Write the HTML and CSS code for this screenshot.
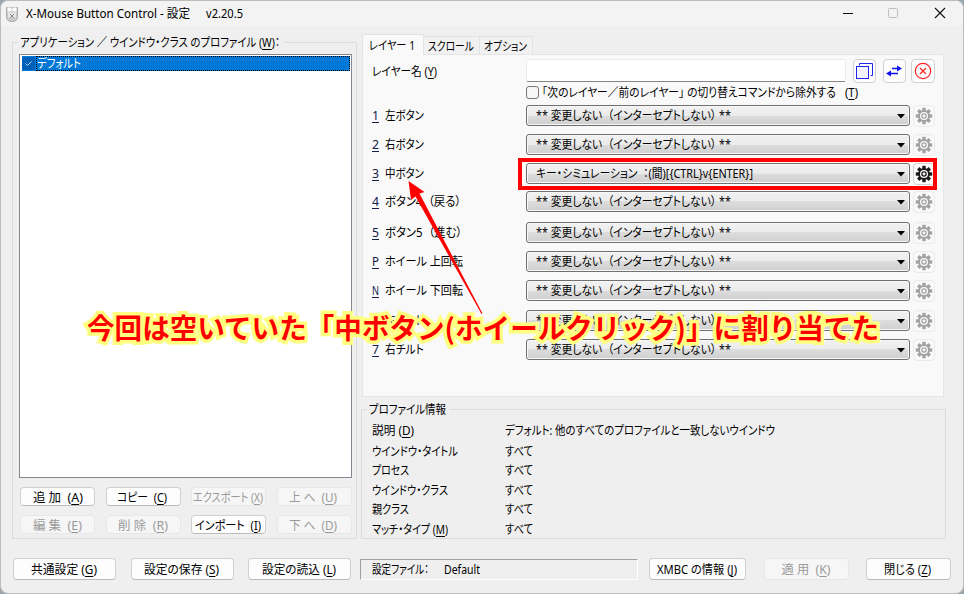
FILE: index.html
```html
<!DOCTYPE html>
<html lang="ja">
<head>
<meta charset="utf-8">
<title>X-Mouse Button Control - 設定</title>
<link rel="stylesheet" href="styles.css">
</head>
<body>
<svg class="defs" width="0" height="0">
  <symbol id="gear" viewBox="0 0 18 18">
    <g fill="currentColor">
      <rect x="7.3" y=".8" width="3.4" height="16.4"/>
      <rect x="7.3" y=".8" width="3.4" height="16.4" transform="rotate(45 9 9)"/>
      <rect x="7.3" y=".8" width="3.4" height="16.4" transform="rotate(90 9 9)"/>
      <rect x="7.3" y=".8" width="3.4" height="16.4" transform="rotate(135 9 9)"/>
      <circle cx="9" cy="9" r="5.9"/>
    </g>
    <circle cx="9" cy="9" r="4" fill="#fbfbfb"/>
    <circle cx="9" cy="9" r="2.1" fill="none" stroke="currentColor" stroke-width="1.3"/>
  </symbol>
</svg>
<div class="window">
  <header class="titlebar">
    <svg class="app-icon" width="12" height="16" viewBox="0 0 12 16"><path d="M.5 1.5h11v9q0 5-5.500 5t-5.500-5z" fill="#c9c9c9" stroke="#aaa"/><path d="M1.500 1.500h4v4h-4zM6.500 1.500h4v4h-4z" fill="#fff"/><path d="M2 6.500h8v5H2z" fill="#e8e8e8"/><path d="M4 8l4 4M8 8l-4 4" stroke="#888"/></svg>
    <span class="title" data-w="164">X-Mouse Button Control - 設定</span>
    <span class="version" data-w="37">v2.20.5</span>
    <svg class="winctl" width="104" height="14" viewBox="0 0 104 14"><path d="M1 6.500h10" stroke="#111" fill="none"/><rect x="46.500" y="1.500" width="9" height="9" rx="1" fill="none" stroke="#c0c0c0"/><path d="M93 1l10 10M103 1L93 11" stroke="#111" stroke-width="1.100"/></svg>
  </header>

  <main class="content">
    <section class="group profiles">
      <h2 class="legend"><span data-w="260">アプリケーション ／ ウインドウ・クラス のプロファイル (<u>W</u>)：</span></h2>
      <div class="listbox">
        <div class="item">
          <svg class="check" width="13" height="13" viewBox="0 0 13 13"><rect width="13" height="13" rx="2" fill="#005fb8"/><path d="M3.500 6.500l2 2 4-4" fill="none" stroke="#c5dcf2"/></svg>
          <div class="item-name"><span data-w="44">デフォルト</span></div>
        </div>
      </div>
      <div class="actions">
        <button class="btn"><span data-w="50">追 加&nbsp; (<u>A</u>)</span></button>
        <button class="btn"><span data-w="50">コピー&nbsp; (<u>C</u>)</span></button>
        <button class="btn" disabled><span data-w="70">エクスポート (<u>X</u>)</span></button>
        <button class="btn" disabled><span data-w="48">上 へ&nbsp; (<u>U</u>)</span></button>
        <button class="btn" disabled><span data-w="49">編 集&nbsp; (<u>E</u>)</span></button>
        <button class="btn" disabled><span data-w="50">削 除&nbsp; (<u>R</u>)</span></button>
        <button class="btn"><span data-w="66">インポート&nbsp; (<u>I</u>)</span></button>
        <button class="btn" disabled><span data-w="48">下 へ&nbsp; (<u>D</u>)</span></button>
      </div>
    </section>

    <section class="right">
      <nav class="tabs">
        <div class="tab active"><span data-w="46">レイヤー 1</span></div>
        <div class="tab"><span data-w="46">スクロール</span></div>
        <div class="tab"><span data-w="43">オプション</span></div>
      </nav>
      <div class="panel">
        <div class="layer">
          <div class="layer-label"><span data-w="65">レイヤー名 (<u>Y</u>)</span></div>
          <input class="layer-input" type="text">
          <div class="tools">
            <div class="tool"><svg width="22" height="22" viewBox="0 0 22 22"><path d="M5.500 5.500V3.500h13v12h-2" fill="none" stroke="#2222f0"/><rect x="2.500" y="6.500" width="12" height="12" fill="#f4f4ff" stroke="#2222f0"/></svg></div>
            <div class="tool"><svg width="22" height="22" viewBox="0 0 22 22"><path d="M8 8.500h7M6 13.500h8" stroke="#1111ef" stroke-width="1.500"/><path d="M13 5.500l5 3-5 3zM7 10.500l-5 3 5 3z" fill="#1111ef"/></svg></div>
            <div class="tool wide"><svg width="22" height="22" viewBox="0 0 22 22"><circle cx="11" cy="11" r="7.700" fill="none" stroke="#f22" stroke-width="1.200"/><path d="M8 8l6 6M14 8l-6 6" stroke="#f22" stroke-width="1.200"/></svg></div>
          </div>
        </div>
        <div class="exclude"><i class="box"></i><span data-w="294">「次のレイヤー／前のレイヤー」 の切り替えコマンドから除外する</span><span class="key" data-w="13">(<u>T</u>)</span></div>
        <div class="rows" id="rows"></div>
      </div>
      <section class="group info">
        <h2 class="legend"><span data-w="77">プロファイル情報</span></h2>
        <dl class="details">
          <dt><span data-w="42">説明 (<u>D</u>)</span></dt><dd><span data-w="270">デフォルト: 他のすべてのプロファイルと一致しないウインドウ</span></dd>
          <dt><span data-w="86">ウインドウ・タイトル</span></dt><dd><span data-w="28">すべて</span></dd>
          <dt><span data-w="37">プロセス</span></dt><dd><span data-w="28">すべて</span></dd>
          <dt><span data-w="76">ウインドウ・クラス</span></dt><dd><span data-w="28">すべて</span></dd>
          <dt><span data-w="37">親クラス</span></dt><dd><span data-w="28">すべて</span></dd>
          <dt><span data-w="76">マッチ・タイプ (<u>M</u>)</span></dt><dd><span data-w="28">すべて</span></dd>
        </dl>
      </section>
    </section>
  </main>

  <footer class="footer">
    <button class="btn"><span data-w="66">共通設定 (<u>G</u>)</span></button>
    <button class="btn"><span data-w="75">設定の保存 (<u>S</u>)</span></button>
    <button class="btn"><span data-w="74">設定の読込 (<u>L</u>)</span></button>
    <div class="status"><span data-w="57">設定ファイル：</span><span data-w="36">Default</span></div>
    <button class="btn"><span data-w="80">XMBC の情報 (<u>J</u>)</span></button>
    <button class="btn" disabled><span data-w="49">適 用&nbsp; (<u>K</u>)</span></button>
    <button class="btn"><span data-w="47">閉じる (<u>Z</u>)</span></button>
  </footer>

  <div class="highlight"></div>
  <svg class="arrow" width="80" height="140" viewBox="0 0 80 140"><path d="M3.500 1L19.500 12 14.500 13.500 77.500 133.500 76.500 134 10.500 16.500 6 20z" fill="#f00"/></svg>
  <div class="caption"><span data-w="792">今回は空いていた「中ボタン(ホイールクリック)」に割り当てた</span></div>
</div>
<script src="main.js"></script>
</body>
</html>
```
FILE: styles.css
```css
* { box-sizing: border-box; }
body {
  margin: 0;
  background: #9aa7ae;
  overflow: hidden;
  color: #000;
  font: 12px/16px "Noto Sans", "Noto Sans CJK JP", sans-serif;
}
.defs { position: absolute; }
.window {
  position: relative;
  width: 964px;
  height: 594px;
  display: flex;
  flex-direction: column;
  background: #efefef;
  border: 1px solid #bcbcbc;
  border-radius: 8px;
  overflow: hidden;
}
[data-w] {
  display: inline-block;
  flex: none;
  white-space: nowrap;
  transform-origin: 0 50%;
  font-feature-settings: "palt";
}
.content [data-w], .footer [data-w] { margin: 1px 1px -1px -1px; }
u { text-underline-offset: 2px; text-decoration-thickness: 1px; text-decoration-skip-ink: none; }

.titlebar {
  height: 25px;
  flex: none;
  display: flex;
  align-items: center;
  padding: 0 17px 0 5px;
  background: #f3f3f3;
}
.title { margin-left: 8px; }
.version { margin-left: 16px; }
.winctl { margin-left: auto; }

.content { display: flex; height: 513px; flex: none; padding-left: 11px; }
.group { position: relative; border: 1px solid #dcdcdc; }
.legend {
  position: absolute;
  top: -9px;
  left: 5px;
  margin: 0;
  padding: 0 3px;
  background: #efefef;
  font: inherit;
  display: flex;
}
.profiles { width: 345px; height: 497px; margin-top: 16px; padding: 11px 4px 0 6px; }
.listbox { width: 333px; height: 424px; padding: 1px 1px 0 2px; border: 1px solid #828790; background: #fff; }
.item { display: flex; height: 15px; background: #0078d7; }
.check { margin-top: 1px; }
.item-name { flex: 1; margin-left: 1px; border: 1px dotted #000; color: #fff; line-height: 13px; display: flex; }
.content .item-name [data-w] { margin: 0; }
.actions {
  display: grid;
  grid-template-columns: repeat(4, 75px);
  grid-auto-rows: 19px;
  justify-content: space-between;
  row-gap: 9px;
  padding: 9px 0 0 1px;
  width: 333px;
}
.btn {
  display: flex;
  align-items: center;
  justify-content: center;
  padding: 0;
  border: 1px solid #d0d0d0;
  border-bottom-color: #bcbcbc;
  border-radius: 4px;
  background: #fdfdfd;
  color: #000;
  font: inherit;
}
.btn:disabled { background: #f6f6f6; border-color: #e7e7e7; color: #9a9a9a; }

.right { margin-left: 4px; width: 587px; }
.tabs { display: flex; align-items: flex-end; height: 28px; padding: 0 0 0 1px; }
.tab {
  display: flex;
  justify-content: center;
  align-items: center;
  height: 18px;
  background: #f1f1f1;
  border: 1px solid #e3e3e3;
  border-width: 1px 1px 0 0;
  width: 56px;
}
.tab:last-child { width: 53px; }
.tab.active { width: 62px; height: 21px; border-left-width: 1px; background: #f9f9f9; position: relative; margin-bottom: -1px; }
.panel { width: 582px; height: 343px; margin-left: 1px; padding: 4px 0 0 10px; background: #f9f9f9; border: 1px solid #e5e5e5; }
.layer { display: flex; height: 24px; }
.layer-label { width: 153px; padding-top: 4px; display: flex; }
.layer-input { width: 320px; height: 23px; padding: 0 4px; border: 1px solid #ececec; border-bottom-color: #868686; border-radius: 2px; background: #fff; font: inherit; }
.tools { display: flex; margin-left: 7px; }
.tool { width: 23px; height: 24px; margin-right: 7px; border: 1px solid #d0d0d0; border-radius: 4px; background: #fdfdfd; }
.tool.wide { width: 24px; margin-left: -2px; }
.tool.wide svg { margin-left: 0; }
.exclude { display: flex; align-items: center; height: 16px; margin: 1px 0 0 153px; }
.box { width: 13px; height: 13px; margin-right: 4px; border: 1px solid #777; border-radius: 3px; background: #f6f6f6; }
.exclude .key { margin-left: 8px; }
.rows { display: grid; grid-template-rows: 29px 29px 28px 31px 29px 29px 30px 29px 29px; margin-top: 5px; }
.row { display: flex; height: 22px; }
.row-key { width: 13px; padding-top: 2px; display: flex; color: #10204a; }
.row-name { width: 140px; padding-top: 2px; display: flex; }
.combo {
  display: flex;
  justify-content: space-between;
  align-items: center;
  width: 384px;
  height: 21px;
  padding: 0 4px 1px 10px;
  border: 1px solid #707070;
  border-radius: 3px;
  background: linear-gradient(#f2f2f2, #ebebeb 50%, #dddddd 50%, #cfcfcf);
  box-shadow: inset 0 0 0 1px #f7f7f7;
}
.combo svg { margin-top: 2px; }
.gear-btn {
  display: flex;
  align-items: center;
  justify-content: center;
  width: 22px;
  height: 22px;
  margin: 0 0 0 3px;
  border: 1px solid #ebebeb;
  border-radius: 4px;
  color: #a2a2a2;
}
.gear-btn.on { color: #1a1a1a; border-color: #d0d0d0; background: #fdfdfd; }

.info { width: 585px; height: 130px; margin-top: 12px; }
.details {
  display: grid;
  grid-template-columns: 133px 1fr;
  grid-template-rows: 21px 19px 20px 19px 20px 19px;
  margin: 0;
  padding: 12px 0 0 11px;
}
.details dt, .details dd { margin: 0; display: flex; }

.footer { display: flex; padding: 19px 0 0 12px; }
.footer .btn { height: 22px; width: 103px; margin-right: 15px; }
.footer .btn:nth-child(2) { margin-right: 14px; }
.footer .btn:nth-child(3) { margin-right: 9px; }
.footer .status + .btn { width: 97px; margin-right: 18px; }
.footer .status ~ .btn:nth-child(6) { width: 85px; margin-right: 17px; }
.footer .btn:last-child { width: 85px; margin-right: 0; }
.status {
  display: flex;
  width: 278px;
  height: 21px;
  gap: 15px;
  margin: 1px 11px 0 0;
  padding: 1px 0 0 12px;
  border: 1px solid #a0a0a0;
  border-right-color: #fff;
  border-bottom-color: #fff;
}

.highlight { position: absolute; left: 517px; top: 157px; width: 419px; height: 32px; border: 4px solid #f00; }
.arrow { position: absolute; left: 404px; top: 179px; }
.caption {
  position: absolute;
  left: 86px;
  top: 306px;
  font: 700 28px/40px "Noto Sans CJK JP", sans-serif;
  color: #f00;
  -webkit-text-stroke: 7px #ffff80;
  paint-order: stroke fill;
  stroke-linejoin: round;
}
.caption [data-w] { font-feature-settings: normal; }
```
FILE: main.js
```js
const intercept = "** 変更しない &nbsp;（インターセプトしない）&nbsp;**";
const rows = [
  ["1", "左ボタン", 39],
  ["2", "右ボタン", 39],
  ["3", "中ボタン", 39, "キー・シミュレーション &nbsp;：(間)[{CTRL}v{ENTER}]", 217],
  ["4", "ボタン4 &nbsp;（戻る）", 76],
  ["5", "ボタン5 &nbsp;（進む）", 77],
  ["P", "ホイール 上回転", 78],
  ["N", "ホイール 下回転", 78],
  ["6", "左チルト", 39],
  ["7", "右チルト", 39]
];

document.getElementById("rows").innerHTML = rows.map(([key, name, width, value, valueWidth]) => `
  <div class="row">
    <div class="row-key"><span data-w="7"><u>${key}</u></span></div>
    <div class="row-name"><span data-w="${width}">${name}</span></div>
    <div class="combo"><span data-w="${valueWidth || 195}">${value || intercept}</span>
      <svg width="8" height="5" viewBox="0 0 8 5"><path d="M0 0h8L4 4.500z" fill="#000"/></svg></div>
    <div class="gear-btn${value ? " on" : ""}"><svg width="18" height="18"><use href="#gear"/></svg></div>
  </div>`).join("");

// Squeeze each label horizontally to the width given in its data-w.
for (const el of document.querySelectorAll("[data-w]")) {
  const target = Number(el.dataset.w);
  const natural = el.getBoundingClientRect().width;
  el.style.width = target + "px";
  el.style.transform = `scaleX(${target / natural})`;
}
```
